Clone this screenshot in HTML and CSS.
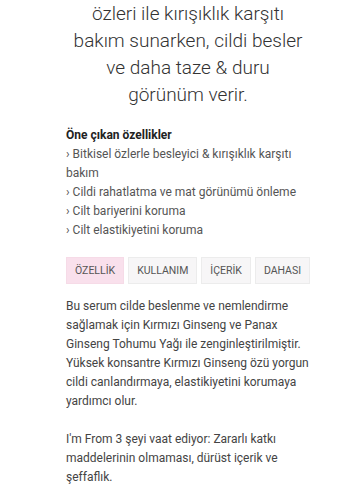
FILE: index.html
```html
<!DOCTYPE html>
<html lang="tr">
<head>
  <meta charset="UTF-8">
  <meta name="viewport" content="width=device-width, initial-scale=1.0">
  <title>I'm From - Ginseng Serum</title>
  <link rel="stylesheet" href="styles.css">
</head>
<body>
  <div class="content">
    <!-- Ürün açıklaması -->
    <p class="intro">özleri ile kırışıklık karşıtı bakım sunarken, cildi besler ve daha taze &amp; duru görünüm verir.</p>

    <!-- Özellikler -->
    <h3 class="features-title">Öne çıkan özellikler</h3>
    <ul class="features">
      <li>› Bitkisel özlerle besleyici &amp; kırışıklık karşıtı bakım</li>
      <li>› Cildi rahatlatma ve mat görünümü önleme</li>
      <li>› Cilt bariyerini koruma</li>
      <li>› Cilt elastikiyetini koruma</li>
    </ul>

    <!-- Sekmeler -->
    <div class="tabs">
      <span class="tab active">ÖZELLİK</span>
      <span class="tab">KULLANIM</span>
      <span class="tab">İÇERİK</span>
      <span class="tab">DAHASI</span>
    </div>

    <div class="tab-body">
      <p>Bu serum cilde beslenme ve nemlendirme sağlamak için Kırmızı Ginseng ve Panax Ginseng Tohumu Yağı ile zenginleştirilmiştir. Yüksek konsantre Kırmızı Ginseng özü yorgun cildi canlandırmaya, elastikiyetini korumaya yardımcı olur.</p>
      <p>I'm From 3 şeyi vaat ediyor: Zararlı katkı maddelerinin olmaması, dürüst içerik ve şeffaflık.</p>
    </div>
  </div>
</body>
</html>
```

FILE: styles.css
```css
/* Style global */
body, html {
  margin: 0;
  padding: 0;
  background: #fff;
  font-family: Roboto, "Noto Sans", sans-serif;
  overflow: hidden;
}

.content {
  width: 244px;
  margin-left: 66px;
}

/* Texte centré */
.intro {
  margin: 0 4px;
  text-align: center;
  font-size: 19px;
  font-weight: 300;
  line-height: 27px;
  color: #333;
}

.features-title {
  margin: 18px 0 0;
  font-size: 12px;
  font-weight: 700;
  line-height: 19px;
  color: #222;
}

.features {
  list-style: none;
  margin: 0;
  padding: 0;
  font-size: 12px;
  line-height: 19px;
  color: #555;
}

/* Sekmeler */
.tabs {
  display: flex;
  gap: 4px;
  margin-top: 17px;
}

.tab {
  display: flex;
  align-items: center;
  height: 25px;
  padding: 0 8px;
  border: 1px solid #ececec;
  background: #f7f6f7;
  font-size: 10.5px;
  color: #555;
}

.tab.active {
  background: #f9e0ec;
  border-color: #f6dbe7;
}

.tab-body {
  margin-top: 13px;
  font-size: 12px;
  line-height: 19px;
  color: #444;
}

.tab-body p {
  margin: 0 0 19px;
}
```
